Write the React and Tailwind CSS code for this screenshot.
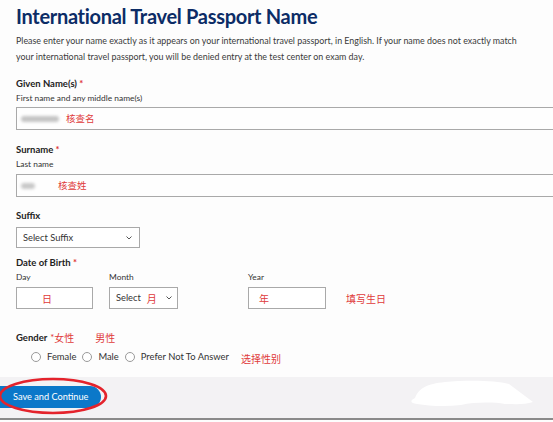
import React from "react";

const cjk = { fontFamily: '"Noto Sans CJK SC", "Noto Sans", sans-serif' };

function Chevron() {
  return (
    <svg width="8" height="6" viewBox="0 0 8 6" className="ml-auto">
      <path d="M1.5 1.5 L4 4 L6.5 1.5" fill="none" stroke="#555" strokeWidth="1" />
    </svg>
  );
}

function Radio({ label }) {
  return (
    <div className="flex items-center">
      <span className="w-[10px] h-[10px] rounded-full border border-[#9a9a9a] bg-white" />
      <span className="ml-[6px]">{label}</span>
    </div>
  );
}

export default function App() {
  return (
    <div
      className="relative w-[553px] h-[422px] overflow-hidden bg-[#fdfdfd] text-[#222]"
      style={{ fontFamily: 'Lato, "Open Sans", sans-serif' }}
    >
      <div className="pl-4">
        <h1 className="mt-[2px] text-[20px] leading-[28px] font-bold text-[#0c2c66] tracking-[-0.3px]">
          International Travel Passport Name
        </h1>
        <p className="mt-[3px] max-w-[512px] text-[8.9px] leading-[16px] text-[#3a3a3a]">
          Please enter your name exactly as it appears on your international travel passport, in English. If your name
          does not exactly match your international travel passport, you will be denied entry at the test center on exam
          day.
        </p>

        <div className="mt-[12px] text-[9.5px] leading-[14px] font-bold">
          Given Name(s) <span className="text-[#d33]">*</span>
        </div>
        <div className="text-[8.4px] leading-[12px] mt-[1px] text-[#333]">First name and any middle name(s)</div>
        <div className="mt-[3px] h-[23px] w-[560px] border border-[#a9a9a9] bg-[#fefefe] flex items-center pl-[4px]">
          <span className="w-[38px] h-[6px] rounded-full bg-[#c4c4c4] blur-[1.5px]" />
          <span className="ml-[7px] text-[9.5px] text-[#e03a3a]" style={cjk}>核查名</span>
        </div>

        <div className="mt-[13px] text-[9.5px] leading-[14px] font-bold">
          Surname <span className="text-[#d33]">*</span>
        </div>
        <div className="text-[8.4px] leading-[12px] mt-[1px] text-[#333]">Last name</div>
        <div className="mt-[4px] h-[23px] w-[560px] border border-[#a9a9a9] bg-[#fefefe] flex items-center pl-[4px]">
          <span className="w-[14px] h-[6px] rounded-full bg-[#c8c8c8] blur-[1.5px]" />
          <span className="ml-[23px] text-[9.5px] text-[#e03a3a]" style={cjk}>核查姓</span>
        </div>

        <div className="mt-[12px] text-[9.5px] leading-[14px] font-bold">Suffix</div>
        <div className="mt-[4px] h-[21px] w-[124px] border border-[#a9a9a9] bg-white flex items-center pl-[6px] pr-[6px] text-[9.3px] text-[#333]">
          Select Suffix
          <Chevron />
        </div>

        <div className="mt-[8px] text-[9.5px] leading-[14px] font-bold">
          Date of Birth <span className="text-[#d33]">*</span>
        </div>
        <div className="flex text-[8.4px] leading-[12px] mt-[1px] text-[#333]">
          <span className="w-[93px]">Day</span>
          <span className="w-[139px]">Month</span>
          <span>Year</span>
        </div>
        <div className="flex items-center mt-[4px]">
          <div className="h-[22px] w-[77px] border border-[#a9a9a9] bg-white flex items-center pl-[25px] text-[10px] text-[#e03a3a]" style={cjk}>
            日
          </div>
          <div className="ml-[16px] h-[22px] w-[69px] border border-[#a9a9a9] bg-white flex items-center pl-[6px] pr-[4px] text-[9.3px] text-[#333]">
            Select
            <span className="ml-[6px] text-[10px] text-[#e03a3a]" style={cjk}>月</span>
            <Chevron />
          </div>
          <div className="ml-[70px] h-[22px] w-[78px] border border-[#a9a9a9] bg-white flex items-center pl-[10px] text-[10px] text-[#e03a3a]" style={cjk}>
            年
          </div>
          <span className="ml-[20px] text-[10px] text-[#e03a3a]" style={cjk}>填写生日</span>
        </div>

        <div className="mt-[22px] flex items-center text-[9.5px] leading-[14px]">
          <span className="font-bold">Gender</span>
          <span className="ml-[3px] text-[#d33]">*</span>
          <span className="text-[10px] text-[#e03a3a]" style={cjk}>女性</span>
          <span className="ml-[21px] text-[10px] text-[#e03a3a]" style={cjk}>男性</span>
        </div>
        <div className="mt-[4px] ml-[15px] flex items-center gap-[6px] text-[9.4px] text-[#333]">
          <Radio label="Female" />
          <Radio label="Male" />
          <Radio label="Prefer Not To Answer" />
          <span className="ml-[6px] mt-[2px] text-[10px] text-[#e03a3a]" style={cjk}>选择性别</span>
        </div>
      </div>

      <div className="relative mt-[11px] h-[43px] bg-[#f3f2f4] border-b-2 border-[#8a8a8a]">
        <div className="absolute left-0 top-[9px] h-[22px] w-[101px] rounded-r-full rounded-l-[4px] bg-[#0b78c9] flex items-center pl-[13px] text-[9.2px] text-white">
          Save and Continue
        </div>
        <svg className="absolute left-0 top-0" width="112" height="40" viewBox="0 0 112 40">
          <ellipse cx="53" cy="19" rx="53" ry="17" fill="none" stroke="#e4232c" strokeWidth="2.6" />
        </svg>
        <svg className="absolute left-[405px] top-[1px]" width="130" height="30" viewBox="0 0 130 30">
          <path
            d="M10 20 C14 10 22 6 40 4 C60 2 90 2 104 6 C112 12 120 18 128 24 C120 27 108 26 100 26 C88 24 70 24 56 27 C40 29 24 28 12 26 C6 25 4 23 10 20 Z"
            fill="#ffffff"
          />
        </svg>
      </div>
    </div>
  );
}
